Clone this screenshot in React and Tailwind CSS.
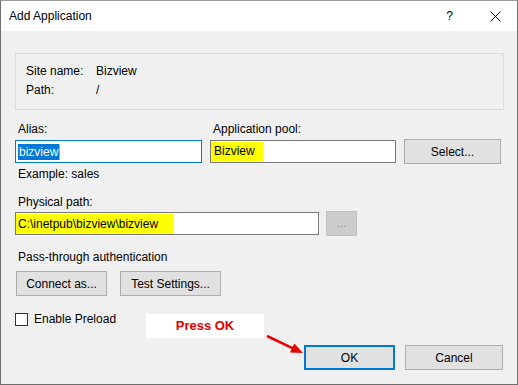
import React from "react";

const font = { fontFamily: '"Liberation Sans", Arial, sans-serif' };

const Button = ({ children, className = "" }) => (
  <div
    className={`h-[25px] flex items-center justify-center bg-[#e1e1e1] border border-[#adadad] text-[12px] text-black ${className}`}
  >
    {children}
  </div>
);

const Label = ({ children, className = "" }) => (
  <div className={`h-[16px] leading-[16px] text-[12px] text-black pl-[3px] ${className}`}>
    {children}
  </div>
);

export default function App() {
  return (
    <div
      className="relative w-[518px] h-[385px] flex flex-col border-t border-t-[#9c9c9c] border-x border-b border-[#6e6e6e] bg-[#f0f0f0] overflow-hidden"
      style={font}
    >
      {/* Title bar */}
      <div className="h-[30px] shrink-0 bg-white flex items-center pl-[8px] pr-[16px]">
        <span className="text-[12px] text-black">Add Application</span>
        <span className="ml-auto text-[12px] text-black">?</span>
        <svg className="ml-[37px]" width="11" height="11" viewBox="0 0 11 11">
          <path d="M0.5 0.5 L10.5 10.5 M10.5 0.5 L0.5 10.5" stroke="#000" strokeWidth="1" />
        </svg>
      </div>

      {/* Body */}
      <div className="flex flex-col pl-[14px] pt-[22px]">
        {/* Info box */}
        <div className="w-[489px] h-[57px] border border-[#dcdcdc] pt-[8px] pl-[10px]">
          <div className="flex h-[19px] leading-[19px] text-[12px]">
            <span className="w-[70px]">Site name:</span>
            <span>Bizview</span>
          </div>
          <div className="flex h-[19px] leading-[19px] text-[12px]">
            <span className="w-[70px]">Path:</span>
            <span>/</span>
          </div>
        </div>

        {/* Labels */}
        <div className="flex gap-[8px] mt-[11px]">
          <Label className="w-[187px]">Alias:</Label>
          <Label className="w-[186px]">Application pool:</Label>
        </div>

        {/* Inputs */}
        <div className="flex items-center gap-[8px] mt-[2px] h-[25px]">
          <div className="w-[187px] h-[23px] bg-white border border-[#0078d7] flex items-center pl-[2px]">
            <span className="h-[16px] leading-[16px] text-[12px] bg-[#0078d7] text-white pl-[1px] pr-[1px] border-r border-r-[#e8a060]">
              bizview
            </span>
          </div>
          <div className="w-[186px] h-[23px] bg-white border border-[#7a7a7a] flex items-center">
            <span className="h-[19px] leading-[19px] text-[12px] bg-[#ffff00] text-black pl-[3px] w-[52px]">
              Bizview
            </span>
          </div>
          <Button className="w-[97px]">Select...</Button>
        </div>

        <Label className="mt-[2px]">Example: sales</Label>

        <Label className="mt-[12px]">Physical path:</Label>

        <div className="flex items-center gap-[7px] mt-[1px] h-[25px]">
          <div className="w-[304px] h-[23px] bg-white border border-[#7a7a7a] flex items-center">
            <span className="h-[20px] leading-[20px] text-[12px] bg-[#ffff00] text-black pl-[2px] w-[158px]">
              C:\inetpub\bizview\bizview
            </span>
          </div>
          <div className="w-[31px] h-[25px] flex items-center justify-center bg-[#cccccc] border border-[#bfbfbf] text-[11px] text-[#8a8a8a]">
            ...
          </div>
        </div>

        <Label className="mt-[13px]">Pass-through authentication</Label>

        <div className="flex gap-[13px] mt-[6px] pl-[1px]">
          <Button className="w-[91px]">Connect as...</Button>
          <Button className="w-[101px]">Test Settings...</Button>
        </div>

        <div className="flex items-center h-[16px] mt-[15px]">
          <div className="w-[13px] h-[13px] bg-white border border-[#333333]" />
          <span className="ml-[6px] text-[12px] leading-[16px]">Enable Preload</span>
        </div>

        <div className="flex justify-end gap-[10px] pr-[14px] mt-[18px]">
          <div className="w-[91px] h-[25px] flex items-center justify-center bg-[#e1e1e1] border-2 border-[#0078d7] text-[12px] text-black">
            OK
          </div>
          <Button className="w-[98px]">Cancel</Button>
        </div>
      </div>

      {/* Annotation overlay */}
      <div className="absolute left-[145px] top-[313px] w-[118px] h-[24px] bg-white flex items-center justify-center">
        <span className="text-[13px] font-bold text-[#e00000]">Press OK</span>
      </div>
      <svg className="absolute left-[261px] top-[329px]" width="50" height="30" viewBox="0 0 50 30">
        <line x1="5" y1="6" x2="31" y2="18.3" stroke="#e80000" strokeWidth="2.5" />
        <polygon points="41,23 28,22.4 32.3,13.4" fill="#e80000" />
      </svg>
    </div>
  );
}
